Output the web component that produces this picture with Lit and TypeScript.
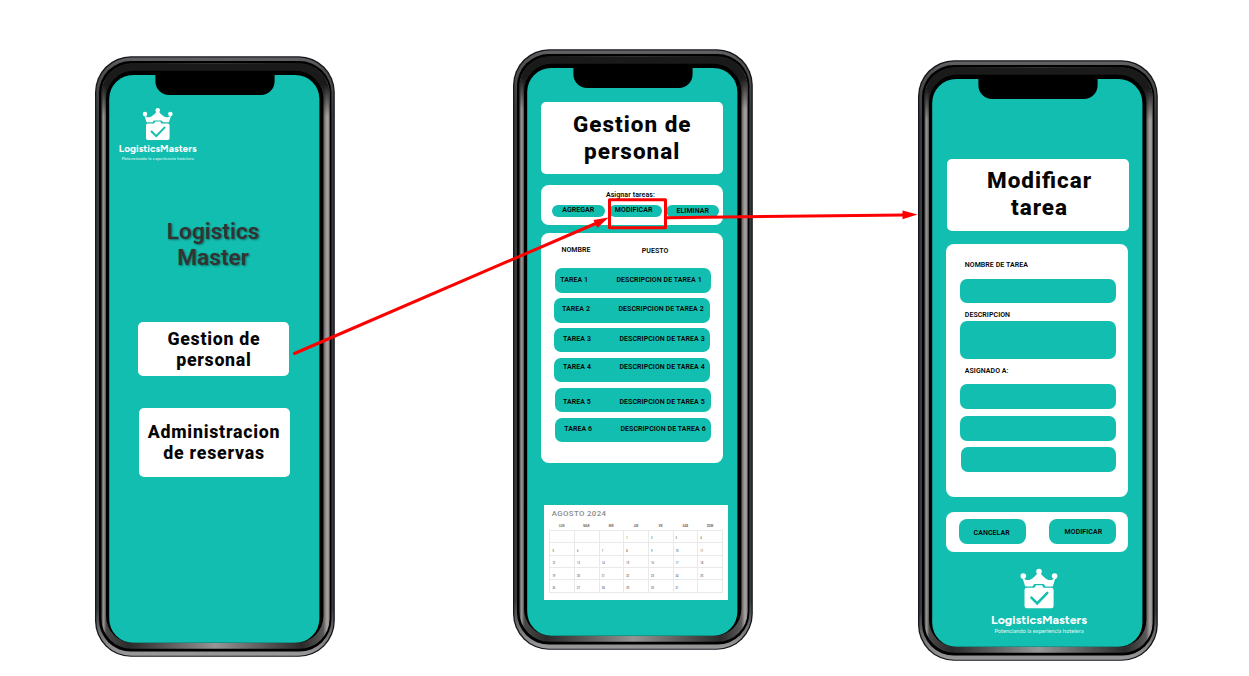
import { LitElement, html, svg, css } from "lit";
import { customElement, property } from "lit/decorators.js";
import { styleMap } from "lit/directives/style-map.js";

interface TaskRow {
  n: number;
  shift: number;
  pad: number;
  drop: number;
  gap: number;
}

const TASKS: TaskRow[] = [
  { n: 1, shift: 0.7, pad: 5.3, drop: 7.6, gap: 56.2 },
  { n: 2, shift: 0, pad: 7.8, drop: 7.0, gap: 56.4 },
  { n: 3, shift: 0, pad: 8.8, drop: 7.1, gap: 56.4 },
  { n: 4, shift: 0, pad: 8.8, drop: 5.3, gap: 56.4 },
  { n: 5, shift: 0.7, pad: 8.1, drop: 9.8, gap: 56.4 },
  { n: 6, shift: 0.7, pad: 9.3, drop: 7.3, gap: 56.2 },
];

const WEEKDAYS = ["LUN", "MAR", "MIÉ", "JUE", "VIE", "SÁB", "DOM"];

@customElement("phone-frame")
export class PhoneFrame extends LitElement {
  static styles = css`
    :host {
      display: block;
      position: relative;
      flex: none;
      width: 240px;
      height: 600.5px;
    }
    .shell {
      position: absolute;
      inset: 0;
      width: 240px;
      height: 601px;
      overflow: visible;
    }
    .content {
      position: relative;
      display: flex;
      flex-direction: column;
      align-items: flex-start;
      height: 100%;
    }
  `;

  render() {
    return html`
      <svg class="shell" viewBox="0 0 240 601">
        <defs>
          <linearGradient id="rim" x1="0" y1="0" x2="0" y2="1">
            <stop offset="0" stop-color="#626262" />
            <stop offset="0.02" stop-color="#505050" />
            <stop offset="0.1" stop-color="#393a3c" />
            <stop offset="0.92" stop-color="#393a3c" />
            <stop offset="0.985" stop-color="#8c8c8c" />
            <stop offset="1" stop-color="#9a9a9a" />
          </linearGradient>
          <linearGradient id="band" x1="0" y1="0" x2="1" y2="0">
            <stop offset="0" stop-color="#4a4848" />
            <stop offset="0.01" stop-color="#9c9898" />
            <stop offset="0.021" stop-color="#4a4848" />
            <stop offset="0.12" stop-color="#2a2a2a" />
            <stop offset="0.5" stop-color="#959595" />
            <stop offset="0.88" stop-color="#2a2a2a" />
            <stop offset="0.972" stop-color="#5a5858" />
            <stop offset="0.988" stop-color="#a8a2a2" />
            <stop offset="1" stop-color="#8e8a8a" />
          </linearGradient>
          <linearGradient id="cap" x1="0" y1="0" x2="0" y2="1">
            <stop offset="0" stop-color="#1a1a1a" />
            <stop offset="0.4" stop-color="#1a1a1a" />
            <stop offset="1" stop-color="#1a1a1a" stop-opacity="0" />
          </linearGradient>
        </defs>
        <rect x="0" y="0.2" width="239.800" height="600.5" rx="36" fill="#14141c" />
        <rect x="1.3" y="1.5" width="237.2" height="598.2" rx="35" fill="url(#rim)" />
        <rect x="4" y="5" width="232.4" height="590.6" rx="32" fill="#000" />
        <rect x="6.4" y="7.6" width="228.2" height="585.2" rx="30" fill="url(#band)" />
        <path d="M6.4 60V37.6a30 30 0 0 1 30-30H204.6a30 30 0 0 1 30 30V60z" fill="url(#cap)" />
        <path
          d="M11 42.700a28 28 0 0 1 28-28H200.4a28 28 0 0 1 28 28V559.8a27 27 0 0 1-27 27H38a27 27 0 0 1-27-27z"
          fill="#000"
        />
        <rect x="14.2" y="19" width="210.2" height="567.8" rx="24" fill="#12beaf" />
        <path d="M60.4 18H179.6V25.200a13.8 13.8 0 0 1-13.8 13.8H74.2A13.8 13.8 0 0 1 60.4 25.200z" fill="#000" />
      </svg>
      <div class="content"><slot></slot></div>
    `;
  }
}

@customElement("brand-logo")
export class BrandLogo extends LitElement {
  @property({ type: Number }) scale = 1;

  static styles = css`
    :host {
      display: block;
    }
    .art {
      display: block;
    }
    .name {
      font: 700 12.4px "Figtree", Lato, sans-serif;
      fill: #fff;
    }
    .tag {
      font: 400 5.2px Lato, sans-serif;
      fill: #e4f8f5;
    }
  `;

  render() {
    return html`
      <svg class="art" width=${110 * this.scale} height=${80 * this.scale} viewBox="0 0 110 80">
        <g fill="#fff">
          <circle cx="54" cy="6.5" r="2.8" />
          <circle cx="38.3" cy="11.1" r="2.8" />
          <circle cx="69.6" cy="11.1" r="2.8" />
          <path
            d="M37.400 12.500c3.600 3.500 7.600 3.300 10.800.3 2.500-2.300 4-3.600 4.600-5.500h2.400c.6 1.900 2.100 3.200 4.600 5.500 3.200 3 7.200 3.200 10.800-.3L67.800 21.400H60.500l-1.800-2.300H49.300l-1.800 2.300H40.200z"
          />
          <path
            d="M41.700 22.700H49.400l1.500-2.400h6.200l1.500 2.400h7.800a2.200 2.200 0 0 1 2.200 2.200V41a2.200 2.200 0 0 1-2.200 2.200H41.700a2.200 2.200 0 0 1-2.200-2.200V24.900a2.200 2.200 0 0 1 2.200-2.200z"
          />
        </g>
        <path
          d="M46.400 32.700l5.800 5.700 10.100-10.500"
          fill="none"
          stroke="#12beaf"
          stroke-width="2.500"
          stroke-linecap="round"
        />
        <text class="name" x="6" y="58.500" textLength="96" lengthAdjust="spacingAndGlyphs">LogisticsMasters</text>
        <text class="tag" x="9.500" y="68.300" textLength="89" lengthAdjust="spacingAndGlyphs">Potenciando la experiencia hotelera</text>
      </svg>
    `;
  }
}

@customElement("month-calendar")
export class MonthCalendar extends LitElement {
  static styles = css`
    :host {
      display: block;
      box-sizing: border-box;
      width: 184px;
      height: 95.3px;
      padding: 4px 5.3px 0;
      background: #fff;
      font-family: Roboto, sans-serif;
      color: #8a8a8a;
    }
    .month {
      padding-left: 2.4px;
      height: 10px;
      line-height: 10px;
      font-size: 7.8px;
      font-weight: 500;
      letter-spacing: 0.4px;
      white-space: nowrap;
    }
    .days {
      display: grid;
      grid-template-columns: repeat(7, 1fr);
      margin-top: 6px;
      height: 4.7px;
      width: 173px;
      font-size: 2.8px;
      line-height: 3px;
      font-weight: 700;
      text-align: center;
      color: #666;
    }
    .grid {
      display: grid;
      grid-template-columns: repeat(7, 1fr);
      grid-template-rows: repeat(5, 12.4px);
      width: 173.500px;
      border-top: 1px solid #e9e9e9;
      border-left: 1px solid #e9e9e9;
      box-sizing: border-box;
    }
    .cell {
      box-sizing: border-box;
      border-right: 1px solid #e9e9e9;
      border-bottom: 1px solid #e9e9e9;
      padding: 6.500px 0 0 2px;
      font-size: 2.600px;
      font-weight: 500;
      line-height: 4px;
      color: #666;
    }
  `;

  render() {
    const cells = Array.from({ length: 35 }, (_, i) => i - 2);
    return html`
      <div class="month">AGOSTO 2024</div>
      <div class="days">${WEEKDAYS.map((d) => html`<span>${d}</span>`)}</div>
      <div class="grid">
        ${cells.map((d) => html`<div class="cell">${d > 0 && d < 32 ? d : ""}</div>`)}
      </div>
    `;
  }
}

@customElement("app-root")
export class AppRoot extends LitElement {
  static styles = css`
    :host {
      display: block;
      position: relative;
      width: 1249px;
      height: 676px;
      overflow: hidden;
      background: #fff;
      font-family: Roboto, sans-serif;
      color: #050505;
    }
    .board {
      display: flex;
      align-items: flex-start;
      padding-left: 94.800px;
    }
    .home { margin-top: 56.300px; }
    .staff { margin-top: 49.200px; margin-left: 178.600px; }
    .edit { margin-top: 60.200px; margin-left: 165px; }

    .card {
      box-sizing: border-box;
      flex: none;
      background: #fff;
      border-radius: 8px;
    }
    .label {
      font-size: 7px;
      line-height: 8px;
      font-weight: 600;
      letter-spacing: 0.06px;
      white-space: nowrap;
    }

    .home-logo { margin: 49px 0 0 19.200px; height: 65px; }
    .home-title {
      margin: 48.700px 0 0 58.300px;
      width: 120px;
      text-align: center;
      font-size: 22.700px;
      line-height: 25.700px;
      font-weight: 600;
      color: #333;
      text-shadow: 1px 1px 2px rgba(0, 0, 0, 0.4);
    }
    .menu {
      width: 151.300px;
      border-radius: 5px;
      text-align: center;
      font-size: 17.800px;
      line-height: 20.900px;
      font-weight: 800;
      letter-spacing: 0.7px;
    }
    .menu-staff { margin: 51.400px 0 0 43.400px; height: 54px; padding-top: 6.900px; }
    .menu-bookings {
      margin: 31.800px 0 0 44.200px;
      height: 69px;
      padding: 14.300px 1.200px 0 0;
      letter-spacing: 0.75px;
    }

    .heading {
      width: 182.300px;
      height: 72px;
      border-radius: 5px;
      text-align: center;
      font-size: 22.500px;
      line-height: 27px;
      font-weight: 800;
      letter-spacing: 1px;
      font-feature-settings: "liga" 1;
    }
    .staff-heading { margin: 52.800px 0 0 27.700px; padding-top: 9.100px; }
    .assign {
      margin: 11.200px 0 0 27.700px;
      width: 182.300px;
      height: 40.300px;
      padding: 5.500px 4px 0 10.500px;
    }
    .assign-title { padding-left: 54.300px; letter-spacing: 0.1px; }
    .pills { display: flex; justify-content: space-between; margin-top: 6.400px; }
    .pill {
      box-sizing: border-box;
      width: 53.600px;
      height: 11.500px;
      border-radius: 6px;
      background: #12beaf;
      padding: 0.6px 0 0 10.700px;
    }
    .pill-modify { padding-left: 6.200px; }
    .pill-delete { padding-top: 1.600px; }

    .list {
      margin: 8px 0 0 27.700px;
      width: 182.300px;
      height: 229.700px;
      padding: 12.600px 0 0 13.200px;
    }
    .list-head { display: flex; height: 22.100px; padding-left: 7.200px; }
    .col-role { margin: 1px 0 0 51.200px; }
    .tasks { display: grid; gap: 5.400px; }
    .task {
      box-sizing: border-box;
      display: flex;
      width: 155.700px;
      height: 24.500px;
      border-radius: 7px;
      background: #12beaf;
    }
    .task-name { flex: none; }
    .calendar { margin: 42px 0 0 30.700px; }

    .edit-heading {
      margin: 99.100px 0 0 28.500px;
      padding-top: 7.900px;
      line-height: 26.700px;
      padding-left: 3px;
    }
    .form {
      margin: 13px 0 0 27.700px;
      width: 182.300px;
      height: 253.200px;
      padding: 16.300px 0 0 14.200px;
    }
    .form .label { padding-left: 4.500px; }
    .field {
      width: 155.700px;
      height: 24.700px;
      border-radius: 7px;
      background: #12beaf;
    }
    .field-name { margin: 10px 0 7.300px; }
    .field-text { height: 38.200px; margin: 2.600px 0 7.400px; }
    .field-one { margin-top: 9.400px; }
    .field-two { margin-top: 7.300px; }
    .field-three { margin: 6.300px 0 0 0.7px; width: 155px; }
    .actions {
      display: flex;
      gap: 23px;
      margin: 14.500px 0 0 27.700px;
      width: 182.300px;
      height: 39.800px;
      padding: 7px 0 0 12.800px;
    }
    .action {
      box-sizing: border-box;
      width: 67px;
      height: 24.700px;
      border-radius: 8px;
      background: #12beaf;
      padding: 9.800px 0 0 14.700px;
    }
    .action-modify { padding: 8.700px 0 0 15.700px; }
    .edit-logo { margin: 13px 0 0 66.600px; }

    .arrows { position: absolute; inset: 0; pointer-events: none; }
  `;

  private task(t: TaskRow) {
    const row = { marginLeft: `${t.shift}px`, padding: `${t.drop}px 0 0 ${t.pad}px` };
    const name = { width: `${t.gap}px` };
    return html`
      <div class="task label" style=${styleMap(row)}>
        <span class="task-name" style=${styleMap(name)}>TAREA ${t.n}</span>
        <span>DESCRIPCION DE TAREA ${t.n}</span>
      </div>
    `;
  }

  private arrows() {
    return svg`
      <g fill="none" stroke="#fe0000" stroke-width="3">
        <path d="M294.500 353.500L598 222.500" stroke-linecap="round" />
        <path d="M667 217.700L904 215" />
        <rect x="609.500" y="199.700" width="56" height="28" stroke-linejoin="round" />
      </g>
      <path d="M608.500 217.500L593.400 220L597.400 228z" fill="#fe0000" />
      <path d="M917.500 214.600L902.500 210.400V219.200z" fill="#fe0000" />
    `;
  }

  render() {
    return html`
      <div class="board">
        <phone-frame class="home">
          <brand-logo class="home-logo" .scale=${0.81}></brand-logo>
          <div class="home-title">Logistics<br />Master</div>
          <div class="card menu menu-staff">Gestion de<br />personal</div>
          <div class="card menu menu-bookings">Administracion<br />de reservas</div>
        </phone-frame>

        <phone-frame class="staff">
          <div class="card heading staff-heading">Gestion de<br />personal</div>
          <div class="card assign">
            <div class="label assign-title">Asignar tareas:</div>
            <div class="pills">
              <div class="pill label">AGREGAR</div>
              <div class="pill pill-modify label">MODIFICAR</div>
              <div class="pill pill-delete label">ELIMINAR</div>
            </div>
          </div>
          <div class="card list">
            <div class="list-head label">
              <span>NOMBRE</span>
              <span class="col-role">PUESTO</span>
            </div>
            <div class="tasks">${TASKS.map((t) => this.task(t))}</div>
          </div>
          <month-calendar class="calendar"></month-calendar>
        </phone-frame>

        <phone-frame class="edit">
          <div class="card heading edit-heading">Modificar<br />tarea</div>
          <div class="card form">
            <div class="label">NOMBRE DE TAREA</div>
            <div class="field field-name"></div>
            <div class="label">DESCRIPCION</div>
            <div class="field field-text"></div>
            <div class="label">ASIGNADO A:</div>
            <div class="field field-one"></div>
            <div class="field field-two"></div>
            <div class="field field-three"></div>
          </div>
          <div class="card actions">
            <div class="action label">CANCELAR</div>
            <div class="action action-modify label">MODIFICAR</div>
          </div>
          <brand-logo class="edit-logo"></brand-logo>
        </phone-frame>
      </div>
      <svg class="arrows" width="1249" height="676" viewBox="0 0 1249 676">${this.arrows()}</svg>
    `;
  }
}
